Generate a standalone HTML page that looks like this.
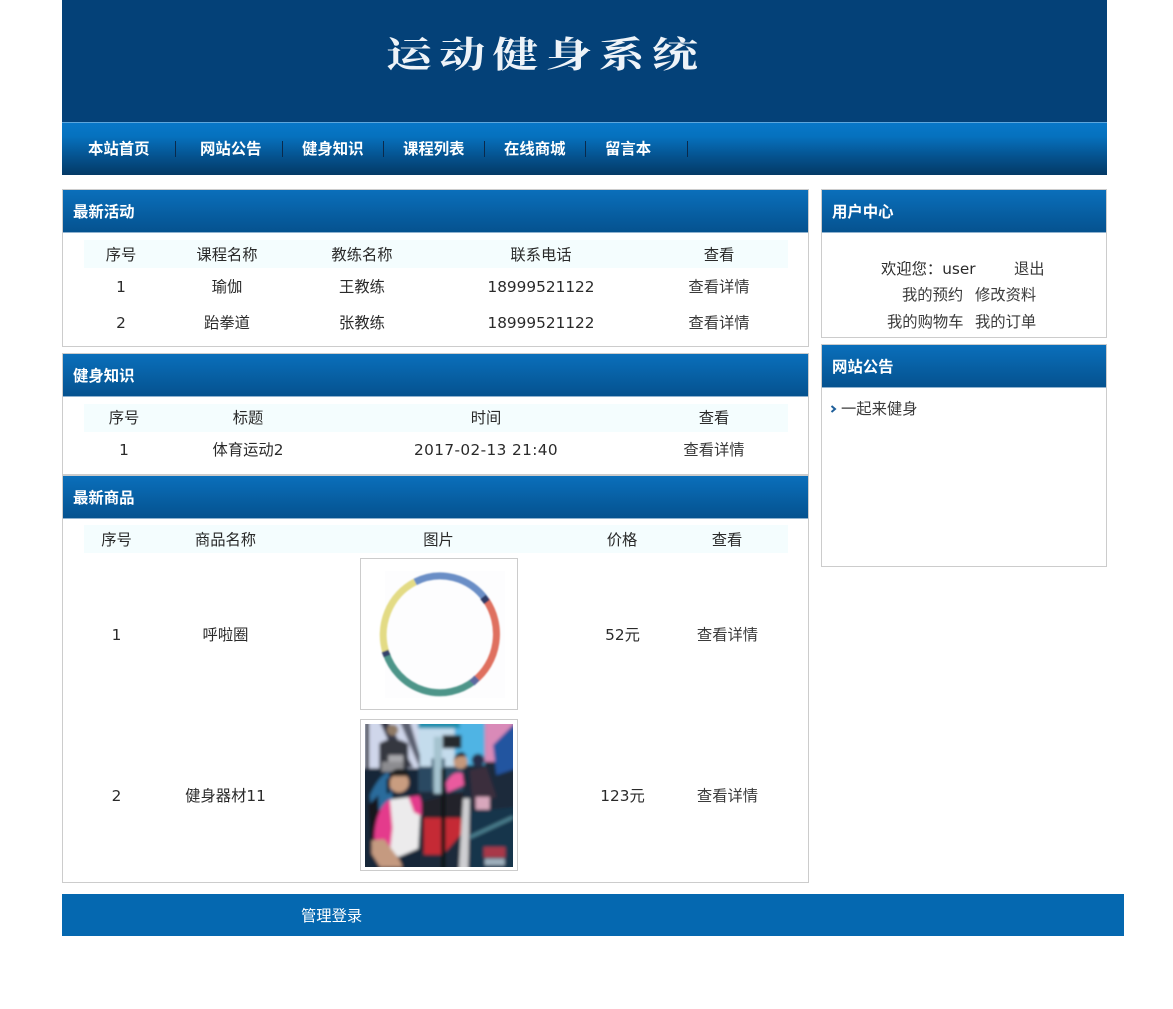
<!DOCTYPE html>
<html lang="zh">
<head>
<meta charset="utf-8">
<title>运动健身系统</title>
<style>
html,body{margin:0;padding:0;background:#fff;width:1173px;height:1009px;overflow:hidden}
body{position:relative;font-family:"DejaVu Sans","Noto Sans CJK SC",sans-serif;font-size:15.3px;color:#2a2a2a}
div,span{position:absolute;box-sizing:border-box}
.c{width:240px;height:24px;line-height:24px;text-align:center;white-space:nowrap}
.l{height:24px;line-height:24px;white-space:nowrap;color:#3a3a3a}
.b{font-family:"Liberation Sans","Noto Sans CJK SC",sans-serif;font-weight:700;color:#fff;font-size:15.4px;height:24px;line-height:24px;white-space:nowrap;margin-top:1px}
.panel{border:1px solid #ccc;background:#fff}
.hd{height:43px;background:linear-gradient(#0a6fbb,#05528f);border-bottom:1px solid #8fb2cf}
.th{background:#f4fdfe;height:28px}
.sep{width:1px;height:16px;top:141px;background:#0a2a4c}
</style>
</head>
<body>
<div style="left:62px;top:0;width:1045px;height:122px;background:#044178"></div>
<div style="left:386px;top:24px;width:340px;height:56px;line-height:56px;font-family:'Noto Serif CJK SC',serif;font-weight:700;font-size:46px;letter-spacing:7.2px;color:#eef3f8;white-space:nowrap;transform:scaleY(.78)">运动健身系统</div>

<div style="left:62px;top:122px;width:1045px;height:53px;background:linear-gradient(#0877c8 0,#0672bf 25%,#05528e 65%,#043a66 100%);border-top:1px solid #5da6dd"></div>
<span class="b" style="left:88px;top:137px">本站首页</span>
<span class="b" style="left:200px;top:137px">网站公告</span>
<span class="b" style="left:302px;top:137px">健身知识</span>
<span class="b" style="left:403px;top:137px">课程列表</span>
<span class="b" style="left:504px;top:137px">在线商城</span>
<span class="b" style="left:605px;top:137px">留言本</span>
<div class="sep" style="left:175px"></div>
<div class="sep" style="left:282px"></div>
<div class="sep" style="left:383px"></div>
<div class="sep" style="left:484px"></div>
<div class="sep" style="left:585px"></div>
<div class="sep" style="left:687px"></div>

<!-- panel 1 -->
<div class="panel" style="left:62px;top:189px;width:747px;height:158px"><div class="hd" style="left:0;top:0;width:745px"></div></div>
<span class="b" style="left:73px;top:200px">最新活动</span>
<div class="th" style="left:84px;top:240px;width:704px"></div>
<div class="c" style="left:1px;top:243px">序号</div>
<div class="c" style="left:107px;top:243px">课程名称</div>
<div class="c" style="left:242px;top:243px">教练名称</div>
<div class="c" style="left:421px;top:243px">联系电话</div>
<div class="c" style="left:599px;top:243px">查看</div>
<div class="c" style="left:1px;top:275px">1</div>
<div class="c" style="left:107px;top:275px">瑜伽</div>
<div class="c" style="left:242px;top:275px">王教练</div>
<div class="c" style="left:421px;top:275px">18999521122</div>
<div class="c" style="left:599px;top:275px;color:#3a3a3a">查看详情</div>
<div class="c" style="left:1px;top:311px">2</div>
<div class="c" style="left:107px;top:311px">跆拳道</div>
<div class="c" style="left:242px;top:311px">张教练</div>
<div class="c" style="left:421px;top:311px">18999521122</div>
<div class="c" style="left:599px;top:311px;color:#3a3a3a">查看详情</div>

<!-- panel 2 -->
<div class="panel" style="left:62px;top:353px;width:747px;height:122px"><div class="hd" style="left:0;top:0;width:745px"></div></div>
<span class="b" style="left:73px;top:364px">健身知识</span>
<div class="th" style="left:84px;top:404px;width:704px"></div>
<div class="c" style="left:4px;top:406px">序号</div>
<div class="c" style="left:128px;top:406px">标题</div>
<div class="c" style="left:366px;top:406px">时间</div>
<div class="c" style="left:594px;top:406px">查看</div>
<div class="c" style="left:4px;top:438px">1</div>
<div class="c" style="left:128px;top:438px">体育运动2</div>
<div class="c" style="left:366px;top:438px;letter-spacing:.38px">2017-02-13 21:40</div>
<div class="c" style="left:594px;top:438px;color:#3a3a3a">查看详情</div>

<!-- panel 3 -->
<div class="panel" style="left:62px;top:475px;width:747px;height:408px"><div class="hd" style="left:0;top:0;width:745px"></div></div>
<span class="b" style="left:73px;top:486px">最新商品</span>
<div class="th" style="left:84px;top:525px;width:704px"></div>
<div class="c" style="left:-3.5px;top:528px">序号</div>
<div class="c" style="left:105.5px;top:528px">商品名称</div>
<div class="c" style="left:318.5px;top:528px">图片</div>
<div class="c" style="left:502px;top:528px">价格</div>
<div class="c" style="left:607px;top:528px">查看</div>
<div class="c" style="left:-3.5px;top:623px">1</div>
<div class="c" style="left:105.5px;top:623px">呼啦圈</div>
<div class="c" style="left:502.5px;top:623px">52元</div>
<div class="c" style="left:607.5px;top:623px;color:#3a3a3a">查看详情</div>
<div class="c" style="left:-3.5px;top:784px">2</div>
<div class="c" style="left:105.5px;top:784px">健身器材11</div>
<div class="c" style="left:502.5px;top:784px">123元</div>
<div class="c" style="left:607.5px;top:784px;color:#3a3a3a">查看详情</div>

<div style="left:360px;top:558px;width:158px;height:152px;border:1px solid #ccc;background:#fff"></div>
<svg style="position:absolute;left:365px;top:563px" width="148" height="143" viewBox="365 563 148 143">
<defs><filter id="s"><feGaussianBlur stdDeviation=".7"/></filter></defs>
<rect x="385" y="571" width="120" height="127" fill="#fdfdfe"/>
<g fill="none" stroke-width="7" filter="url(#s)">
<path d="M415 582 A57 59 0 0 1 486 600" stroke="#6a8ec6"/>
<path d="M486 600 A57 59 0 0 1 474 681" stroke="#df6f5e"/>
<path d="M474 681 A57 59 0 0 1 386 653" stroke="#4d9589"/>
<path d="M386 653 A57 59 0 0 1 415 582" stroke="#e3db85"/>
<path d="M483 597 L487 602" stroke="#2f3a66"/>
<path d="M477 678 L472 683" stroke="#5c6aa0"/>
<path d="M385 651 L387 656" stroke="#34426a"/>
</g>
</svg>

<div style="left:360px;top:719px;width:158px;height:152px;border:1px solid #ccc;background:#fff"></div>
<svg style="position:absolute;left:365px;top:724px" width="148" height="143" viewBox="45 37 445 428" preserveAspectRatio="none">
<defs>
<filter id="p" x="0" y="0" width="100%" height="100%"><feGaussianBlur stdDeviation="4.5"/></filter>
<clipPath id="k"><rect x="45" y="37" width="445" height="428"/></clipPath>
</defs>
<rect x="45" y="37" width="445" height="428" fill="#1d2a3a"/>
<g filter="url(#p)" clip-path="url(#k)">
<rect x="20" y="20" width="490" height="460" fill="#1d2a3a"/>
<rect x="20" y="20" width="190" height="150" fill="#cfd6ea"/>
<rect x="205" y="20" width="110" height="145" fill="#c4dcec"/>
<rect x="315" y="20" width="90" height="140" fill="#4fb4e4"/>
<rect x="405" y="20" width="90" height="130" fill="#d98ab8"/>
<rect x="205" y="20" width="125" height="30" fill="#1a8fae"/>
<path d="M85 20h25l80 147h-40z" fill="#34384a"/>
<path d="M45 20h12v150H45z" fill="#20252e"/>
<path d="M150 30h30l30 100v40z" fill="#5a5f70"/>
<path d="M88 95q40-25 87 0v75H88z" fill="#34373f"/>
<path d="M115 130h45v25h-45z" fill="#a8a8ac"/>
<circle cx="128" cy="55" r="17" fill="#8f7a66"/>
<path d="M20 170h190v310H20z" fill="#182838"/>
<path d="M205 165h135v75H205z" fill="#2a4a62"/>
<path d="M245 140h40v90h-40z" fill="#3e5f72"/>
<path d="M60 250q25-55 55-70l15 90-65 40z" fill="#2c6c9c"/>
<path d="M95 150h65v30H95z" fill="#8c8c90"/>
<circle cx="147" cy="212" r="30" fill="#c99d80"/>
<path d="M118 208q0-37 30-37t30 30l-8-8h-42z" fill="#1a1a1e"/>
<path d="M110 200h10v45h-10z" fill="#111"/>
<path d="M55 280l30-30 5 130-25 40z" fill="#14181e"/>
<path d="M78 375q5-90 45-112l60-8q25 5 28 50l-6 105-60 25-50-40z" fill="#ecebec"/>
<path d="M72 378q5-90 48-115l8 85-10 85-30-35z" fill="#e43a8c"/>
<path d="M176 256l32-5q12 25 8 62l-24-12z" fill="#e43a8c"/>
<path d="M65 385l38-3 45 60 10 23H90l-25-40z" fill="#c59a80"/>
<path d="M215 270l125-32 2 100-55 80h-72z" fill="#22242a"/>
<path d="M222 318h113v48l-55 62h-58z" fill="#c52a36"/>
<path d="M288 215q20-40 50-30l5 35-50 22z" fill="#ea5a9e"/>
<circle cx="332" cy="150" r="21" fill="#c4987c"/>
<path d="M312 145q5-25 28-24l12 12-28 2z" fill="#1c1c22"/>
<circle cx="385" cy="145" r="19" fill="#262f4c"/>
<path d="M360 175l50-10 30 90-70 30z" fill="#3a2d3e"/>
<path d="M378 255h42v38h-42z" fill="#d8a7bc"/>
<path d="M340 260h20l-5 220h-28z" fill="#cfcfd2"/>
<path d="M360 300l140-15v195H360z" fill="#14344c"/>
<path d="M360 370l130-60v12L360 382z" fill="#4b7f8e"/>
<path d="M430 100l70-70v140l-60 20z" fill="#2254a0"/>
<path d="M278 70h57v40h-57z" fill="#26292f"/>
<path d="M252 75h24v170h-24z" fill="#a5c3cf"/>
<path d="M402 405h65v32h-65z" fill="#a83848"/>
<path d="M405 440h60v20h-60z" fill="#9fb0bd"/>
<path d="M274 170h13v310h-13z" fill="#111418"/>
</g>
</svg>

<!-- sidebar -->
<div class="panel" style="left:821px;top:189px;width:286px;height:149px"><div class="hd" style="left:0;top:0;width:284px"></div></div>
<span class="b" style="left:832px;top:200px">用户中心</span>
<span class="l" style="left:881px;top:257px;color:#2a2a2a">欢迎您：user</span>
<span class="l" style="left:1014px;top:257px">退出</span>
<span class="l" style="left:902px;top:283px">我的预约</span>
<span class="l" style="left:975px;top:283px">修改资料</span>
<span class="l" style="left:887px;top:310px">我的购物车</span>
<span class="l" style="left:975px;top:310px">我的订单</span>

<div class="panel" style="left:821px;top:344px;width:286px;height:223px"><div class="hd" style="left:0;top:0;width:284px"></div></div>
<span class="b" style="left:832px;top:355px">网站公告</span>
<svg style="position:absolute;left:830px;top:405px" width="8" height="8" viewBox="0 0 8 8"><path d="M1.5 1 L5 4 L1.5 7" fill="none" stroke="#1f5f9a" stroke-width="2"/></svg>
<span class="l" style="left:841px;top:397px">一起来健身</span>

<!-- footer -->
<div style="left:62px;top:894px;width:1062px;height:42px;background:#0568b0"></div>
<span class="l" style="left:301px;top:904px;color:#fff">管理登录</span>
</body>
</html>
